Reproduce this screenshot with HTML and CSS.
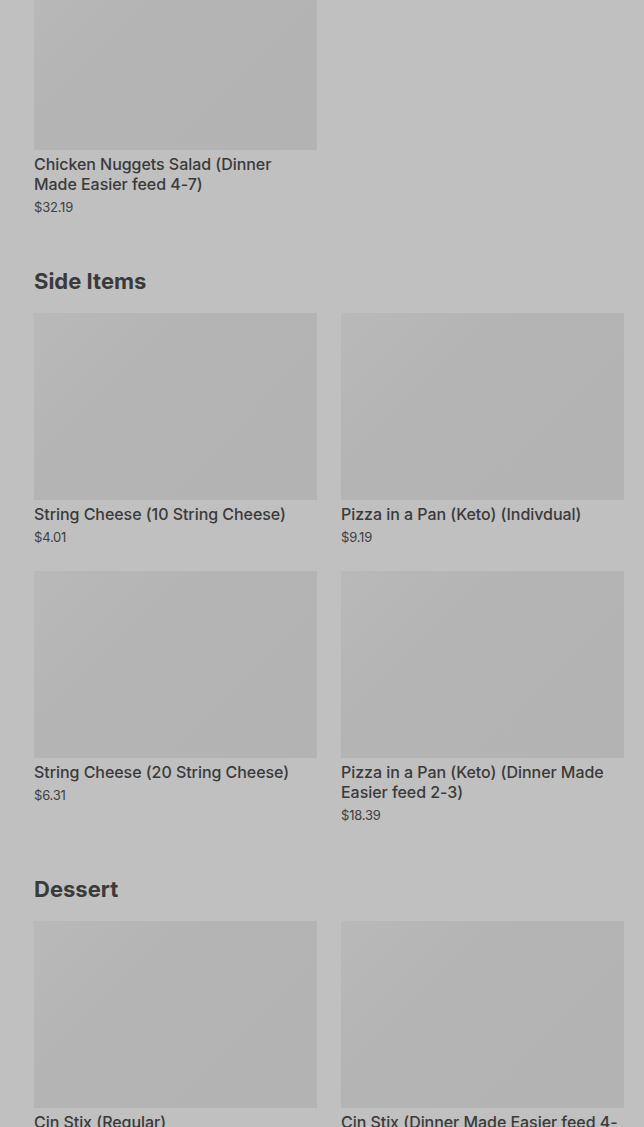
FILE: index.html
```html
<!DOCTYPE html>
<html lang="en">
<head>
<meta charset="utf-8">
<title>Menu</title>
<link rel="stylesheet" href="styles.css">
</head>
<body>
<main class="menu">
  <section class="section section-first">
    <div class="grid">
      <div class="card">
        <div class="thumb"></div>
        <div class="title">Chicken Nuggets Salad (Dinner Made Easier feed 4-7)</div>
        <div class="price">$32.19</div>
      </div>
    </div>
  </section>

  <section class="section">
    <h2 class="heading">Side Items</h2>
    <div class="grid">
      <div class="card">
        <div class="thumb"></div>
        <div class="title">String Cheese (10 String Cheese)</div>
        <div class="price">$4.01</div>
      </div>
      <div class="card">
        <div class="thumb"></div>
        <div class="title">Pizza in a Pan (Keto) (Indivdual)</div>
        <div class="price">$9.19</div>
      </div>
      <div class="card">
        <div class="thumb"></div>
        <div class="title">String Cheese (20 String Cheese)</div>
        <div class="price">$6.31</div>
      </div>
      <div class="card">
        <div class="thumb"></div>
        <div class="title">Pizza in a Pan (Keto) (Dinner Made Easier feed 2-3)</div>
        <div class="price">$18.39</div>
      </div>
    </div>
  </section>

  <section class="section">
    <h2 class="heading">Dessert</h2>
    <div class="grid">
      <div class="card">
        <div class="thumb"></div>
        <div class="title">Cin Stix (Regular)</div>
        <div class="price">$5.99</div>
      </div>
      <div class="card">
        <div class="thumb"></div>
        <div class="title">Cin Stix (Dinner Made Easier feed 4-7)</div>
        <div class="price">$9.99</div>
      </div>
    </div>
  </section>
</main>
</body>
</html>
```

FILE: styles.css
```css
html, body {
  margin: 0;
  padding: 0;
  background: #c0c0c0;
  overflow: hidden;
}

body {
  font-family: Inter, "Noto Sans", "Liberation Sans", sans-serif;
  color: #383838;
}

.menu {
  padding: 0 20px 0 34px;
}

.section {
  margin-top: 50px;
}

.section-first {
  margin-top: -37px;
}

.heading {
  margin: 0 0 18px;
  font-size: 22px;
  line-height: 28px;
  font-weight: 700;
  letter-spacing: 0;
  color: #3a3a3a;
}

.grid {
  display: grid;
  grid-template-columns: 283px 283px;
  column-gap: 24px;
  row-gap: 24px;
}

.card {
  display: flex;
  flex-direction: column;
}

.thumb {
  height: 187px;
  background: linear-gradient(135deg, #b9b9b9 0%, #b4b4b4 35%, #b3b3b3 100%);
}

.title {
  margin-top: 4px;
  padding-right: 4px;
  font-size: 16px;
  line-height: 20px;
  font-weight: 500;
  color: #3a3a3a;
  letter-spacing: -0.05px;
}

.price {
  margin-top: 3px;
  font-size: 13px;
  line-height: 20px;
  font-weight: 400;
  color: #404040;
  letter-spacing: -0.2px;
}
```
